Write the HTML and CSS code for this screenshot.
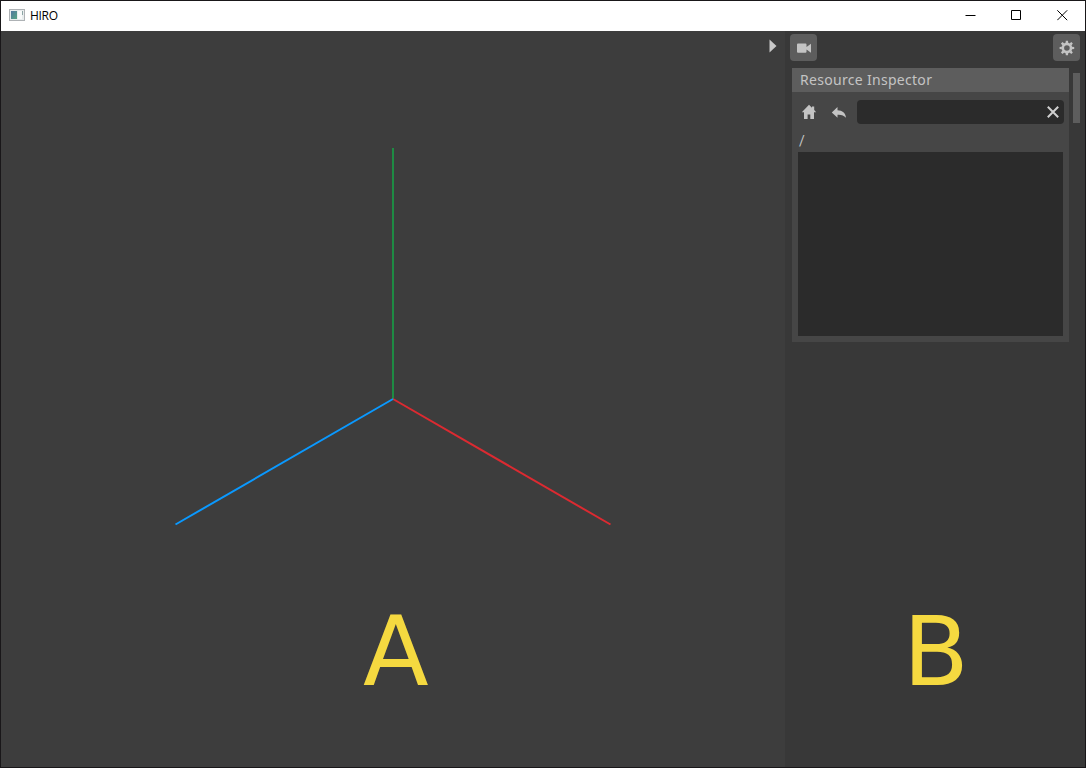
FILE: index.html
```html
<!DOCTYPE html>
<html lang="en">
<head>
<meta charset="utf-8">
<title>HIRO</title>
<link rel="stylesheet" href="styles.css">
</head>
<body>
<div class="window">
  <header class="titlebar">
    <svg class="app-icon" width="16" height="12" viewBox="0 0 16 12">
      <defs><linearGradient id="tint" x2="1" y2="1"><stop stop-color="#5277a0"/><stop offset="1" stop-color="#57a583"/></linearGradient></defs>
      <path fill="#aeb2b5" d="M0 0h16v12H0z"/><path fill="#e8eced" d="M1 1h14v10H1z"/>
      <path fill="url(#tint)" d="M2 2h6v8H2z"/><path fill="#f8fafa" d="M9 2h4v8H9z"/>
      <path fill="#8ca5a5" d="M13 2h1v4h-1z"/>
    </svg>
    <span class="title">HIRO</span>
    <div class="controls">
      <svg width="11" height="11" viewBox="0 0 11 11"><path d="M.5 5.500h10"/></svg>
      <svg width="11" height="11" viewBox="0 0 11 11"><path d="M.5.5h9v9h-9z"/></svg>
      <svg width="11" height="11" viewBox="0 0 11 11"><path d="M.3.3l9.900 9.900M10.200.3L.3 10.200"/></svg>
    </div>
  </header>
  <main class="content">
    <section class="viewport">
      <svg class="scene" width="784" height="736" viewBox="1 31 784 736">
        <path stroke="#1e8b43" d="M393 148V399"/>
        <path stroke="#dc2a31" d="M393 399L610.500 524.500"/>
        <path stroke="#0a99ff" d="M393 399L175.500 524.500"/>
        <path class="expand" d="M769.500 39.500v13l7-6.500z"/>
      </svg>
      <span class="mark mark-a">A</span>
    </section>
    <aside class="sidebar">
      <div class="toolbar">
        <button class="tool" aria-label="Camera">
          <svg width="27" height="27" viewBox="790 34 27 27"><path d="M798 43.500h7.500q1 0 1 1V47l4.500-3.300v9L806.500 49.500v2.200q0 1-1 1H798q-1 0-1-1v-7.200q0-1 1-1z"/></svg>
        </button>
        <button class="tool" aria-label="Settings">
          <svg width="27" height="27" viewBox="-13.900 -14 27 27">
            <circle r="4.100" fill="none" stroke="#c4c4c4" stroke-width="2.600"/>
            <g><path id="tooth" d="M-1.300-5l.2-2.300h2.200l.2 2.300z"/>
            <use href="#tooth" transform="rotate(45)"/><use href="#tooth" transform="rotate(90)"/><use href="#tooth" transform="rotate(135)"/><use href="#tooth" transform="rotate(180)"/><use href="#tooth" transform="rotate(225)"/><use href="#tooth" transform="rotate(270)"/><use href="#tooth" transform="rotate(315)"/></g>
          </svg>
        </button>
      </div>
      <div class="scroll-area">
        <section class="panel">
          <h1 class="panel-title">Resource Inspector</h1>
          <div class="navigation">
            <svg width="59" height="24" viewBox="798 100 59 24">
              <path d="M809 104.800l3 2.900v-1.200h2.200v3.400l2 2.400H814v6.800h-3.700v-4.500h-2.700v4.500H804v-6.800h-2.200z"/>
              <path d="M831.800 112.500l5.700-5.400v3.200c5 .3 8 2.700 8.500 7.500-2.200-2.700-4.700-3.300-8.500-3.100v3.100z"/>
            </svg>
            <div class="search">
              <svg width="12" height="12" viewBox="0 0 12 12"><path d="M.8.8l10.400 10.400M11.200.8L.8 11.200"/></svg>
            </div>
          </div>
          <div class="path">/</div>
          <div class="list"></div>
        </section>
        <div class="scrollbar"></div>
      </div>
      <span class="mark mark-b">B</span>
    </aside>
  </main>
</div>
</body>
</html>
```
FILE: styles.css
```css
* { box-sizing: border-box; }
body { margin: 0; background: #191719; overflow: hidden; }
svg { display: block; }

.window {
  width: 1086px;
  height: 768px;
  border: 1px solid #191719;
  display: flex;
  flex-direction: column;
}

.titlebar {
  height: 30px;
  flex: none;
  background: #fff;
  display: flex;
  align-items: center;
  padding: 0 17px 2px 8px;
}
.title {
  font: 12px/16px "Open Sans", "Noto Sans", sans-serif;
  letter-spacing: -0.3px;
  color: #000;
  margin-left: 5px;
  padding-top: 2px;
}
.controls { margin-left: auto; display: flex; gap: 35px; }
.controls path { fill: none; stroke: #000; }

.content { flex: 1; display: flex; min-height: 0; }
.viewport { width: 784px; background: #3d3d3d; position: relative; }
.scene path { stroke-width: 2; }
.scene .expand { fill: #c8c8c8; stroke: none; }

.mark {
  position: absolute;
  top: 565px;
  font: 96px/112px "DejaVu Sans", sans-serif;
  color: #f5d940;
}
.mark-a { left: 362px; }
.mark-b { left: 118px; }

.sidebar { flex: 1; background: #383838; position: relative; }
.toolbar {
  display: flex;
  justify-content: space-between;
  padding: 3px 5px 0;
}
.tool {
  width: 27px;
  height: 27px;
  border: 0;
  border-radius: 4px;
  padding: 0;
  background: #5d5d5d;
}
.tool svg { fill: #c4c4c4; }

.scroll-area { display: flex; padding: 7px 5px 0 7px; }
.panel { width: 277px; height: 274px; background: #464646; }
.panel-title {
  margin: 0;
  height: 24px;
  padding-left: 8px;
  background: #5d5d5d;
  color: #c4c4c4;
  font: 400 14px/24px "Noto Sans", sans-serif;
  letter-spacing: 0.3px;
  white-space: nowrap;
}
.navigation { display: flex; padding: 8px 5px 0 6px; }
.navigation > svg { fill: #c4c4c4; }
.search {
  flex: 1;
  height: 24px;
  border-radius: 4px;
  background: #2b2b2b;
  display: flex;
  justify-content: flex-end;
  align-items: center;
  padding-right: 5px;
}
.search path { stroke: #d0d0d0; stroke-width: 2; }
.path {
  height: 28px;
  padding: 7px 0 0 7px;
  color: #c4c4c4;
  font: 14px/20px Roboto, "Noto Sans", sans-serif;
}
.list { height: 184px; margin: 0 6px; background: #2b2b2b; }
.scrollbar {
  width: 7px;
  height: 50px;
  margin: 5px 0 0 4px;
  background: #5d5d5d;
}
```
